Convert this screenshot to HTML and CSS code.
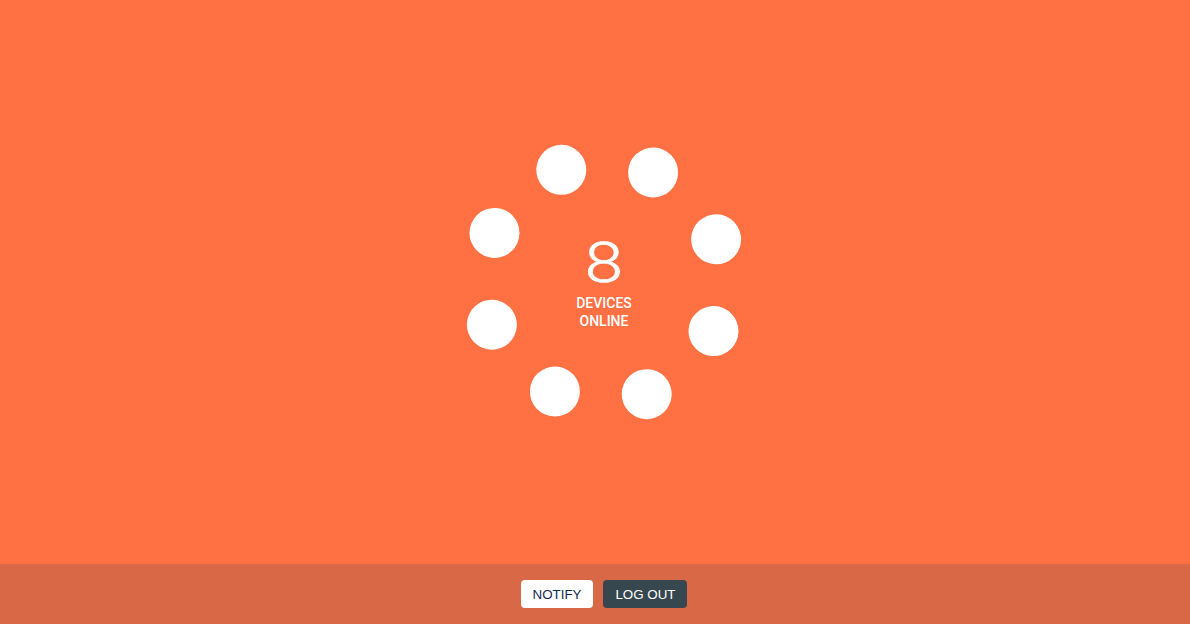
FILE: index.html
```html
<!DOCTYPE html>
<html lang="en">
<head>
<meta charset="utf-8">
<title>Devices</title>
<link rel="stylesheet" href="styles.css">
</head>
<body>
<main class="stage">
  <div class="ring">
    <span class="dot d1"></span>
    <span class="dot d2"></span>
    <span class="dot d3"></span>
    <span class="dot d4"></span>
    <span class="dot d5"></span>
    <span class="dot d6"></span>
    <span class="dot d7"></span>
    <span class="dot d8"></span>
    <div class="count">
      <div class="num">8</div>
      <div class="label">DEVICES<br>ONLINE</div>
    </div>
  </div>
</main>
<footer class="bar">
  <button class="btn btn-light">NOTIFY</button>
  <button class="btn btn-dark">LOG OUT</button>
</footer>
</body>
</html>
```

FILE: styles.css
```css
* { box-sizing: border-box; }
html, body { margin: 0; height: 100%; }
body {
  font-family: Roboto, "Liberation Sans", Arial, sans-serif;
  background: #ff7043;
  display: flex;
  flex-direction: column;
  padding-left: 18px;
  overflow: hidden;
}
.stage {
  height: 564px;
  display: flex;
  align-items: center;
  justify-content: center;
}
.ring {
  position: relative;
  width: 290px;
  height: 290px;
  display: flex;
  align-items: center;
  justify-content: center;
}
.dot {
  position: absolute;
  left: 120px;
  top: 120px;
  width: 50px;
  height: 50px;
  border-radius: 50%;
  background: #fff;
}
.d1 { transform: rotate(-20.85deg) translateY(-120px); }
.d2 { transform: rotate(24.15deg) translateY(-120px); }
.d3 { transform: rotate(69.15deg) translateY(-120px); }
.d4 { transform: rotate(114.15deg) translateY(-120px); }
.d5 { transform: rotate(159.15deg) translateY(-120px); }
.d6 { transform: rotate(204.15deg) translateY(-120px); }
.d7 { transform: rotate(249.15deg) translateY(-120px); }
.d8 { transform: rotate(294.15deg) translateY(-120px); }
.count {
  color: #fff;
  text-align: center;
  margin-top: 2.6px;
}
.num {
  font-size: 55px;
  line-height: 55px;
  font-weight: 300;
  transform: scaleX(1.25);
  -webkit-text-stroke: 0.7px #fff;
}
.label {
  margin-top: 3.4px;
  font-size: 14px;
  line-height: 18px;
  font-weight: 500;
}
.bar {
  height: 60px;
  margin-left: -18px;
  padding-left: 18px;
  background: #d96846;
  display: flex;
  align-items: center;
  justify-content: center;
  gap: 10px;
}
.btn {
  font-family: "Liberation Sans", Arial, sans-serif;
  font-size: 13.333px;
  height: 28px;
  padding: 0 12px;
  border: none;
  border-radius: 4px;
  cursor: pointer;
}
.btn-light { background: #fff; color: #0f2a50; }
.btn-dark { background: #37474f; color: #fff; }
```
